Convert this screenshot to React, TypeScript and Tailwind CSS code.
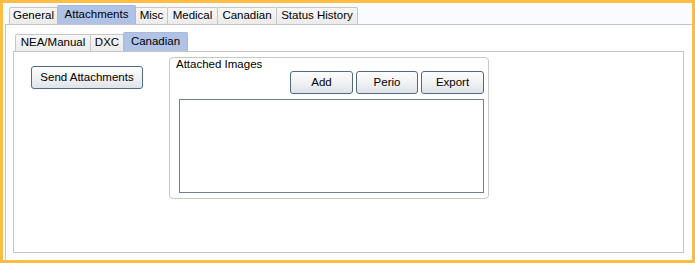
import React from 'react';

const outerTabs = ['General', 'Attachments', 'Misc', 'Medical', 'Canadian', 'Status History'];
const innerTabs = ['NEA/Manual', 'DXC', 'Canadian'];

const Tab = ({ label, selected, width }: { label: string; selected: boolean; width: number }) => (
  <div
    style={{ width }}
    className={
      selected
        ? 'h-[19px] -ml-px flex items-center justify-center border border-b-0 border-[#a9b9d6] bg-[#b0c3e7] rounded-t-[2px] relative z-10'
        : 'h-[17px] -ml-px flex items-center justify-center border border-b-0 border-[#c6c6c6] bg-gradient-to-b from-[#f7f7f7] to-[#ebebeb] rounded-t-[2px]'
    }
  >
    {label}
  </div>
);

const WinButton = ({ label, width }: { label: string; width: number }) => (
  <button
    style={{ width }}
    className="h-[23px] rounded-[3px] border border-[#53698a] bg-gradient-to-b from-[#fdfdfd] via-[#f1f2f4] to-[#dfe3e8] text-black"
  >
    {label}
  </button>
);

const App = () => {
  const outerWidths = [49, 79, 33, 51, 60, 82];
  const innerWidths = [76, 34, 65];

  return (
    <div
      className="w-[695px] h-[263px] border-[3px] border-[#fdbd44] bg-white flex flex-col text-[11.5px] text-black"
      style={{ fontFamily: '"Liberation Sans", Arial, sans-serif' }}
    >
      <div className="h-[21px] shrink-0 bg-[#f9fbff] flex items-end pl-[7px]">
        {outerTabs.map((t, i) => (
          <Tab key={t} label={t} selected={i === 1} width={outerWidths[i]} />
        ))}
      </div>
      <div className="flex-1 ml-[2px] border-l border-t border-[#c4c4c4] flex flex-col pl-[7px] pr-[8px] pb-[7px]">
        <div className="h-[26px] shrink-0 flex items-end pl-[3px]">
          {innerTabs.map((t, i) => (
            <Tab key={t} label={t} selected={i === 2} width={innerWidths[i]} />
          ))}
        </div>
        <div className="flex-1 border border-[#c4c4c4] flex items-start">
          <div className="ml-[17px] mt-[14px]">
            <WinButton label="Send Attachments" width={112} />
          </div>
          <div className="ml-[26px] mt-[5px] w-[320px] h-[142px] border border-[#c8c8c8] rounded-[4px] flex flex-col">
            <div className="h-[13px] leading-[13px] pl-[6px]">Attached Images</div>
            <div className="flex justify-end gap-[3px] pr-[4px]">
              <WinButton label="Add" width={63} />
              <WinButton label="Perio" width={62} />
              <WinButton label="Export" width={63} />
            </div>
            <div className="ml-[9px] mt-[5px] w-[305px] h-[94px] border border-[#6f8194] bg-white" />
          </div>
        </div>
      </div>
    </div>
  );
};

export default App;
